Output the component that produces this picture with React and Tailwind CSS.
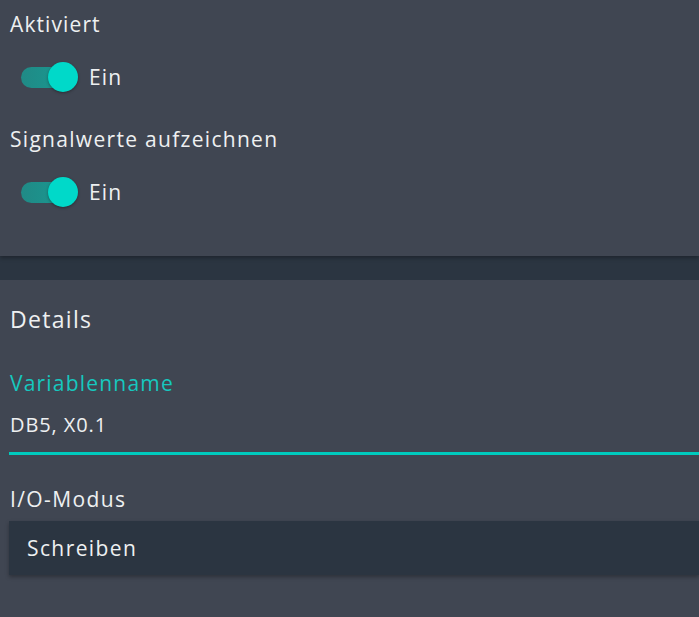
import React from 'react';

function Toggle({ label }) {
  return (
    <div className="flex items-center h-[30px]">
      <div className="relative w-[57px] h-[30px] ml-[11px]">
        <div className="absolute left-0 top-[5px] w-[50px] h-[21px] rounded-full bg-gradient-to-r from-[#208a86] to-[#179a92]" />
        <div className="absolute left-[27px] top-0 w-[30px] h-[30px] rounded-full bg-[#00d9c9] shadow-[0_1px_3px_rgba(0,0,0,0.35)]" />
      </div>
      <span className="ml-[11px] text-[21px] leading-[28px] tracking-[1.2px]">{label}</span>
    </div>
  );
}

export default function App() {
  return (
    <div className="min-h-screen bg-[#2b3541] font-['Open_Sans',sans-serif] text-[#eef0f1] overflow-hidden">
      <section className="relative h-[256px] bg-[#404652] pl-[10px] pt-[10px] shadow-[0_2px_4px_rgba(0,0,0,0.3)]">
        <div className="text-[21px] leading-[28px] tracking-[1.1px]">Aktiviert</div>
        <div className="mt-[24px]">
          <Toggle label="Ein" />
        </div>
        <div className="mt-[33px] text-[21px] leading-[28px] tracking-[1.3px]">Signalwerte aufzeichnen</div>
        <div className="mt-[24px]">
          <Toggle label="Ein" />
        </div>
      </section>

      <div className="h-[24px]" />

      <section className="bg-[#404652] pl-[9px] pt-[24px] pb-[60px]">
        <h2 className="pl-[1px] text-[23px] leading-[30px] tracking-[1.3px]">Details</h2>

        <div className="mt-[35px] pl-[1px] text-[21px] leading-[28px] text-[#16c8bf] tracking-[1.2px]">Variablenname</div>
        <div className="mt-[14px] pl-[1px] text-[20px] leading-[28px] tracking-[0.9px]">DB5, X0.1</div>
        <div className="mt-[13px] h-[3px] bg-[#00cbbe]" />

        <div className="mt-[30px] pl-[1px] text-[21px] leading-[28px] tracking-[1.4px]">I/O-Modus</div>
        <div className="mt-[8px] h-[54px] bg-[#2b3541] flex items-center pl-[18px] shadow-[0_2px_4px_rgba(0,0,0,0.3)]">
          <span className="text-[21px] leading-[28px] tracking-[1.4px]">Schreiben</span>
        </div>
      </section>
    </div>
  );
}
